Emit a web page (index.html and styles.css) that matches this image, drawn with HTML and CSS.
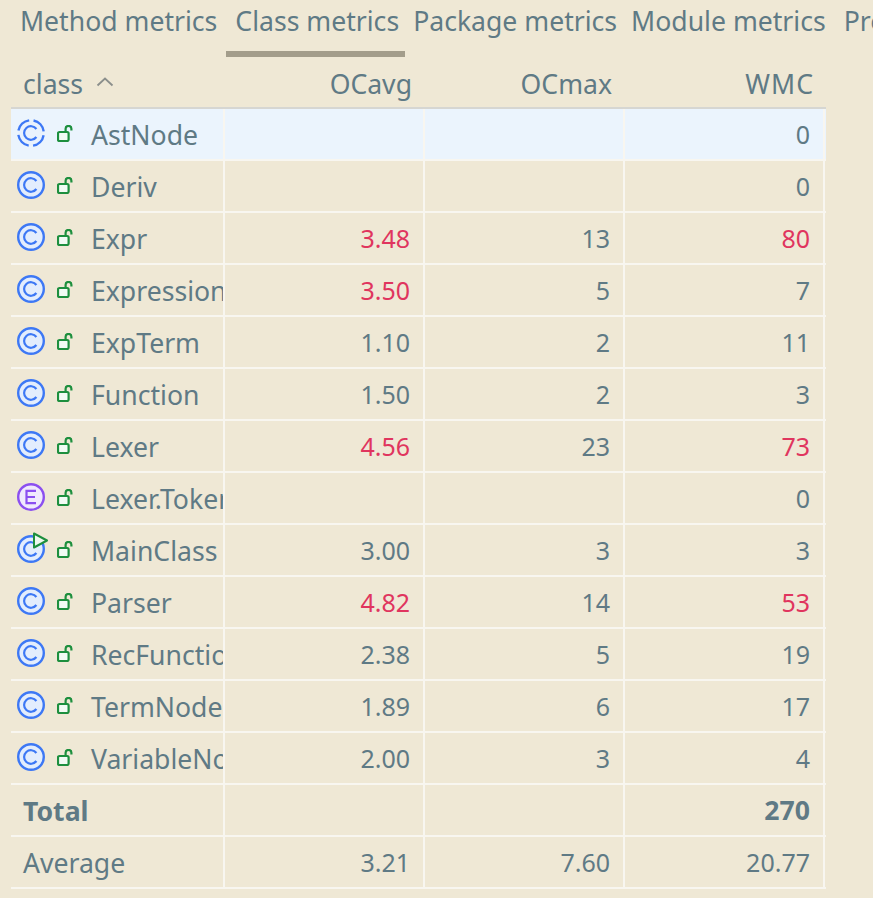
FILE: index.html
```html
<!DOCTYPE html>
<html lang="en">
<head>
<meta charset="utf-8">
<title>Class metrics</title>
<link rel="stylesheet" href="styles.css">
</head>
<body>
<svg class="defs" width="0" height="0" aria-hidden="true">
  <defs>
    <g id="lock">
      <rect x="1" y="7" width="10.6" height="9" rx="1.4" fill="#f2fbf4" stroke="#1d8f3e" stroke-width="2.2"/>
      <path d="M8.6 7V3.8a2.9 2.9 0 0 1 5.8 0V5.6" fill="none" stroke="#1d8f3e" stroke-width="2.2"/>
    </g>
    <g id="cls">
      <circle cx="14" cy="14" r="12.8" fill="#e3edfd" stroke="#3d78f5" stroke-width="2.4"/>
      <path d="M19.4 10a6.8 6.8 0 1 0 0 8" fill="none" stroke="#3d78f5" stroke-width="2.2"/>
    </g>
    <g id="abs">
      <circle cx="14" cy="14" r="12.8" fill="#e9f2fd" stroke="#3d78f5" stroke-width="2.4" stroke-dasharray="15.6 4.5" stroke-dashoffset="-2.25"/>
      <path d="M19.4 10a6.8 6.8 0 1 0 0 8" fill="none" stroke="#3d78f5" stroke-width="2.2"/>
    </g>
    <g id="enum">
      <circle cx="14" cy="14" r="12.8" fill="#f0e9fd" stroke="#8b4ff0" stroke-width="2.4"/>
      <path d="M19 7.8H9.5V20.2H19M9.5 14H18" fill="none" stroke="#8b4ff0" stroke-width="2.2"/>
    </g>
  </defs>
</svg>
<nav class="tabs">
  <span class="tab">Method metrics</span>
  <span class="tab active">Class metrics</span>
  <span class="tab package">Package metrics</span>
  <span class="tab module">Module metrics</span>
  <span class="tab">Project metrics</span>
</nav>
<section class="table">
  <div class="row head">
    <div class="cell name">class <svg class="sort" width="18" height="10" viewBox="0 0 18 10"><path d="M1.5 8.5 9 1.5l7.5 7" fill="none" stroke="#8b8f8c" stroke-width="1.8"/></svg></div>
    <div class="cell">OCavg</div><div class="cell">OCmax</div><div class="cell wide">WMC</div>
  </div>
  <div class="row selected">
    <div class="cell name"><svg class="ic" width="28" height="28"><use href="#abs"/></svg><svg class="lk" width="16" height="17"><use href="#lock"/></svg><span class="label">AstNode</span></div>
    <div class="cell"></div><div class="cell"></div><div class="cell">0</div>
  </div>
  <div class="row">
    <div class="cell name"><svg class="ic" width="28" height="28"><use href="#cls"/></svg><svg class="lk" width="16" height="17"><use href="#lock"/></svg><span class="label">Deriv</span></div>
    <div class="cell"></div><div class="cell"></div><div class="cell">0</div>
  </div>
  <div class="row">
    <div class="cell name"><svg class="ic" width="28" height="28"><use href="#cls"/></svg><svg class="lk" width="16" height="17"><use href="#lock"/></svg><span class="label">Expr</span></div>
    <div class="cell bad">3.48</div><div class="cell">13</div><div class="cell bad">80</div>
  </div>
  <div class="row">
    <div class="cell name"><svg class="ic" width="28" height="28"><use href="#cls"/></svg><svg class="lk" width="16" height="17"><use href="#lock"/></svg><span class="label">Expression</span></div>
    <div class="cell bad">3.50</div><div class="cell">5</div><div class="cell">7</div>
  </div>
  <div class="row">
    <div class="cell name"><svg class="ic" width="28" height="28"><use href="#cls"/></svg><svg class="lk" width="16" height="17"><use href="#lock"/></svg><span class="label">ExpTerm</span></div>
    <div class="cell">1.10</div><div class="cell">2</div><div class="cell">11</div>
  </div>
  <div class="row">
    <div class="cell name"><svg class="ic" width="28" height="28"><use href="#cls"/></svg><svg class="lk" width="16" height="17"><use href="#lock"/></svg><span class="label">Function</span></div>
    <div class="cell">1.50</div><div class="cell">2</div><div class="cell">3</div>
  </div>
  <div class="row">
    <div class="cell name"><svg class="ic" width="28" height="28"><use href="#cls"/></svg><svg class="lk" width="16" height="17"><use href="#lock"/></svg><span class="label">Lexer</span></div>
    <div class="cell bad">4.56</div><div class="cell">23</div><div class="cell bad">73</div>
  </div>
  <div class="row">
    <div class="cell name"><svg class="ic" width="28" height="28"><use href="#enum"/></svg><svg class="lk" width="16" height="17"><use href="#lock"/></svg><span class="label">Lexer.TokenType</span></div>
    <div class="cell"></div><div class="cell"></div><div class="cell">0</div>
  </div>
  <div class="row">
    <div class="cell name"><span class="runnable"><svg class="ic" width="28" height="28"><use href="#cls"/></svg><svg class="run" width="17" height="17" viewBox="0 0 17 17"><path d="M2 1.5 15 8.5 2 15.5Z" fill="#eef8ef" stroke="#1d8f3e" stroke-width="2" stroke-linejoin="round"/></svg></span><svg class="lk" width="16" height="17"><use href="#lock"/></svg><span class="label">MainClass</span></div>
    <div class="cell">3.00</div><div class="cell">3</div><div class="cell">3</div>
  </div>
  <div class="row">
    <div class="cell name"><svg class="ic" width="28" height="28"><use href="#cls"/></svg><svg class="lk" width="16" height="17"><use href="#lock"/></svg><span class="label">Parser</span></div>
    <div class="cell bad">4.82</div><div class="cell">14</div><div class="cell bad">53</div>
  </div>
  <div class="row">
    <div class="cell name"><svg class="ic" width="28" height="28"><use href="#cls"/></svg><svg class="lk" width="16" height="17"><use href="#lock"/></svg><span class="label">RecFunction</span></div>
    <div class="cell">2.38</div><div class="cell">5</div><div class="cell">19</div>
  </div>
  <div class="row">
    <div class="cell name"><svg class="ic" width="28" height="28"><use href="#cls"/></svg><svg class="lk" width="16" height="17"><use href="#lock"/></svg><span class="label">TermNode</span></div>
    <div class="cell">1.89</div><div class="cell">6</div><div class="cell">17</div>
  </div>
  <div class="row">
    <div class="cell name"><svg class="ic" width="28" height="28"><use href="#cls"/></svg><svg class="lk" width="16" height="17"><use href="#lock"/></svg><span class="label">VariableNode</span></div>
    <div class="cell">2.00</div><div class="cell">3</div><div class="cell">4</div>
  </div>
  <div class="row total">
    <div class="cell name plain">Total</div>
    <div class="cell"></div><div class="cell"></div><div class="cell">270</div>
  </div>
  <div class="row">
    <div class="cell name plain">Average</div>
    <div class="cell">3.21</div><div class="cell">7.60</div><div class="cell">20.77</div>
  </div>
</section>
</body>
</html>
```
FILE: styles.css
```css
* { box-sizing: border-box; }
html, body { margin: 0; height: 898px; overflow: hidden; }
body {
  background: #efe8d5;
  color: #5f7a85;
  font-family: "Noto Sans", "Open Sans", sans-serif;
  font-size: 25px;
  width: 873px;
  position: relative;
}
.defs { position: absolute; }
.tabs {
  display: flex;
  height: 57px;
  padding-left: 20px;
  font-size: 26.6px;
  white-space: nowrap;
  overflow: hidden;
}
.tab {
  padding: 3px 0 0;
  margin-right: 18px;
  line-height: 36px;
  flex: none;
  position: relative;
}
.tab.active { margin-right: 14px; }
.tab.package { margin-right: 14px; }
.tab.module { margin-right: 18px; }
.tab.active::after {
  content: "";
  position: absolute;
  left: -9px;
  right: -6px;
  top: 51px;
  height: 6px;
  background: #a39d8b;
}
.table {
  margin-left: 11px;
  width: 815px;
}
.row {
  display: grid;
  grid-template-columns: 214px 200px 200px 200px;
  height: 52px;
  border-bottom: 2px solid #f8f6f0;
}
.head {
  border-bottom: 2px solid #d6d6d2;
  font-size: 26.6px;
}
.head .cell { border-right: 0; padding-top: 3px; }
.head .wide { padding-right: 11px; }
.selected { background: #ebf4fd; }
.cell {
  border-right: 2px solid #f8f6f0;
  padding-right: 13px;
  display: flex;
  align-items: center;
  justify-content: flex-end;
  line-height: 50px;
  overflow: hidden;
  white-space: nowrap;
}
.wide { letter-spacing: 1px; }
.name {
  justify-content: flex-start;
  padding: 2px 0 0 6px;
  font-size: 26.6px;
}
.plain, .head .name { padding-left: 12px; }
.sort { margin-left: 13px; margin-top: -4px; }
.ic { flex: none; display: block; margin-top: -4px; }
.lk { flex: none; margin-left: 12px; margin-top: -4px; }
.label { margin-left: 18px; flex: none; }
.bad { color: #e0355e; }
.total .cell { font-weight: 700; font-size: 26.6px; }
.runnable { position: relative; display: block; width: 28px; height: 28px; flex: none; margin-top: -4px; }
.runnable .ic { margin-top: 0; }
.run { position: absolute; left: 15px; top: -3px; }
```
